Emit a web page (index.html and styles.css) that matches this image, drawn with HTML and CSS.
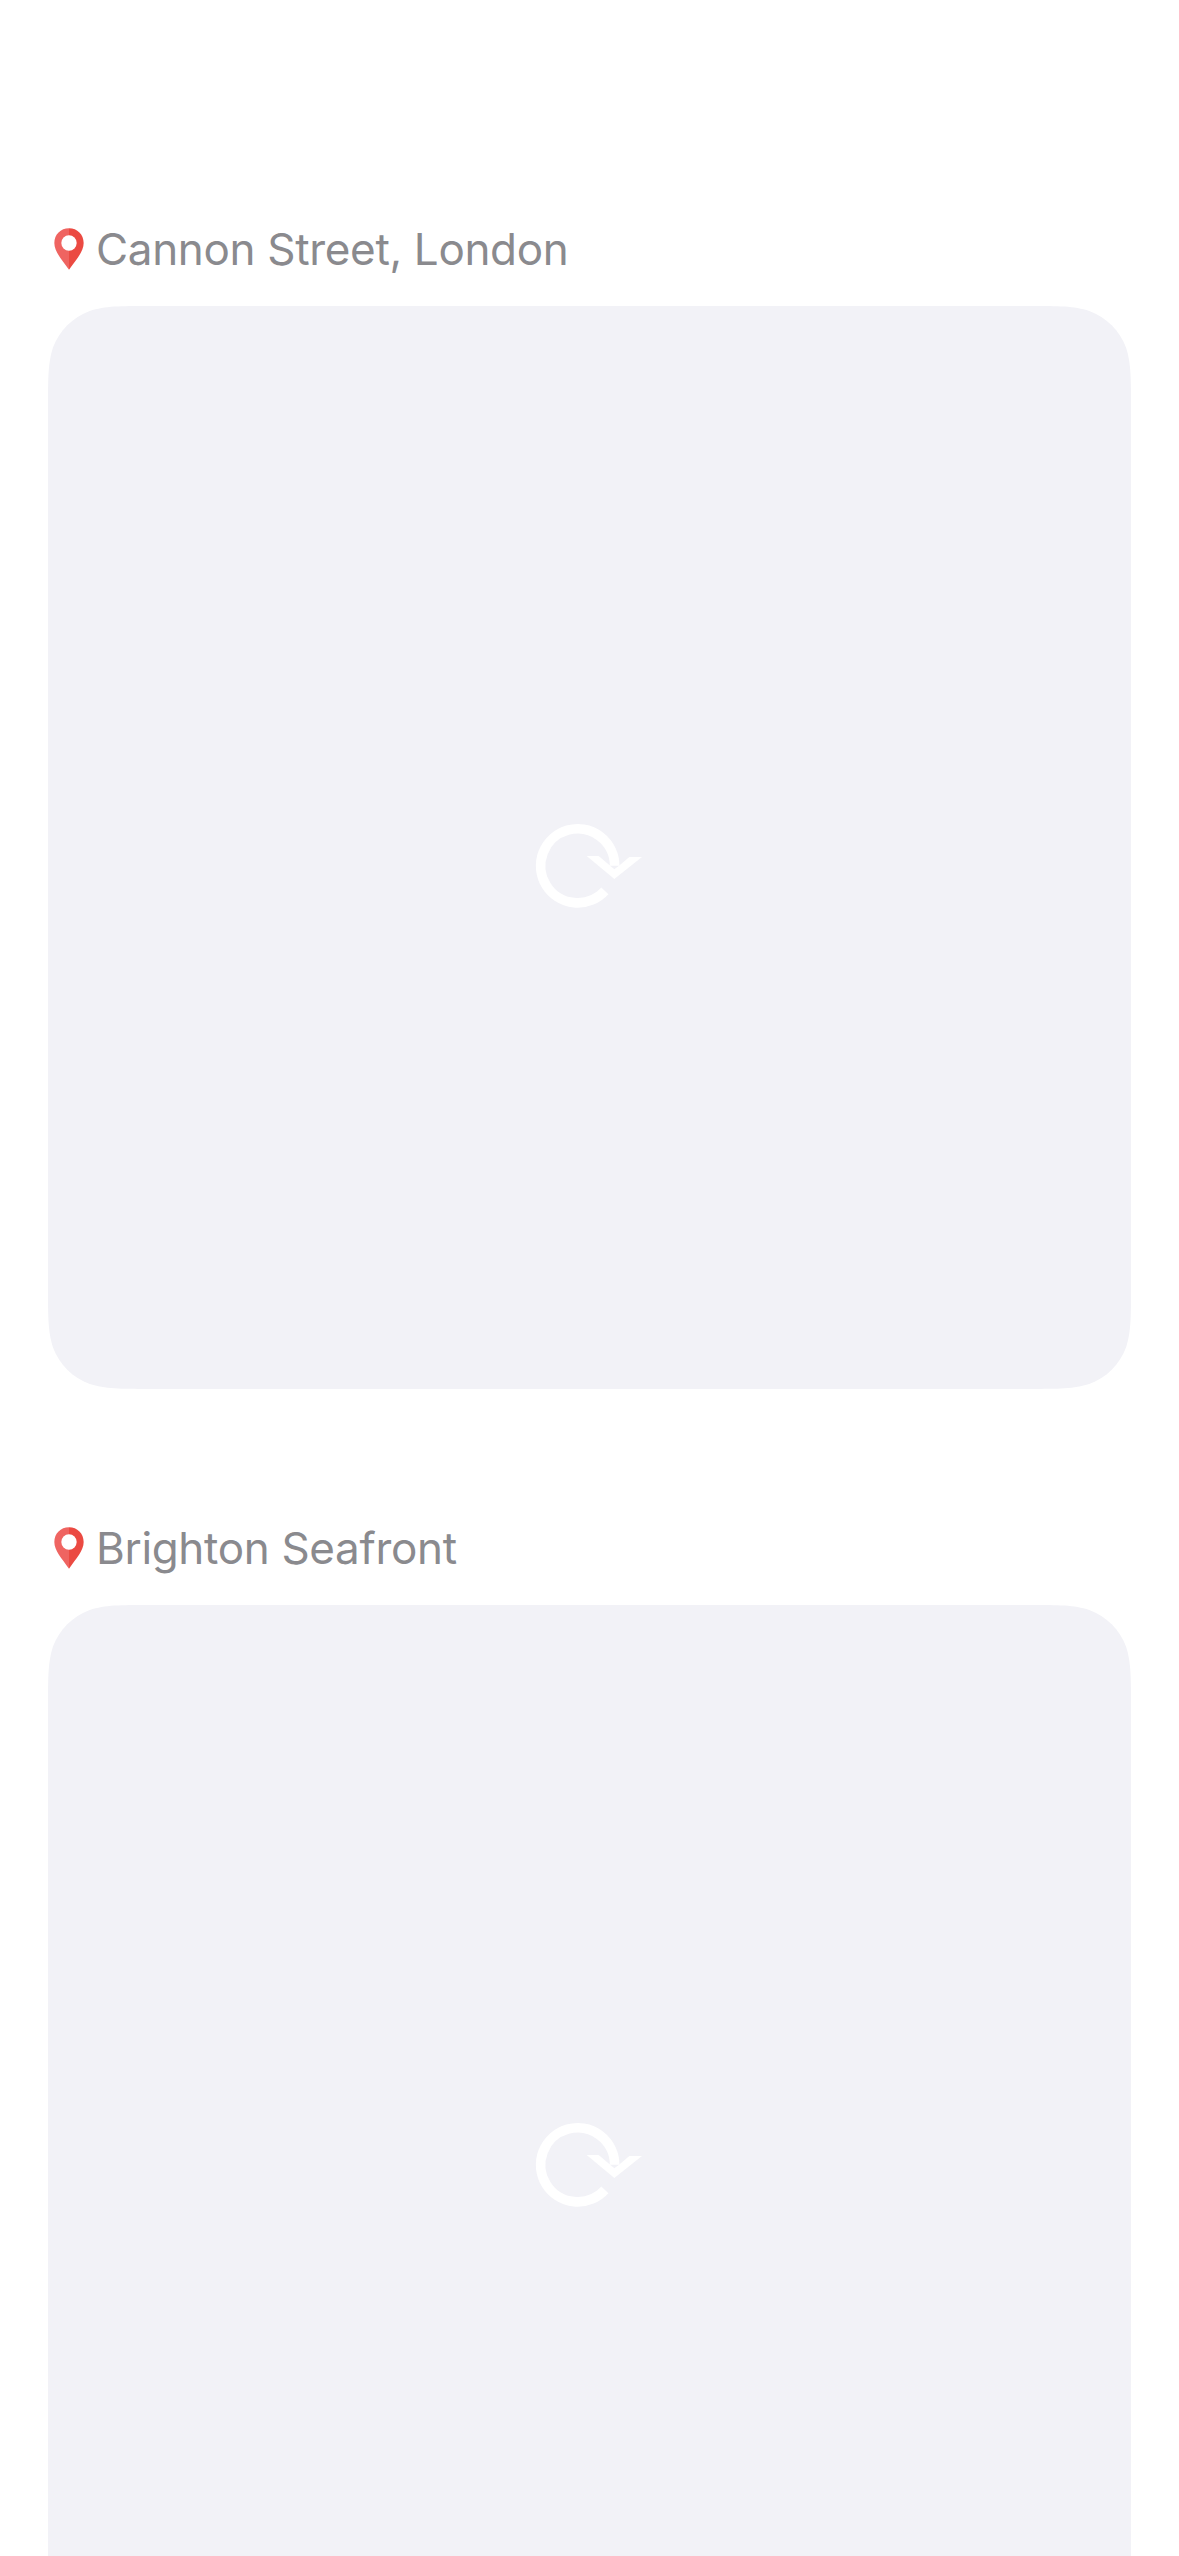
FILE: index.html
```html
<!DOCTYPE html>
<html lang="en">
<head>
<meta charset="utf-8">
<title>Places</title>
<link rel="stylesheet" href="styles.css">
</head>
<body>
<svg class="defs" width="0" height="0" aria-hidden="true">
  <symbol id="pin" viewBox="0 0 90 126">
    <path fill="#ef6461" d="M45 1C20 1 1 20 1 45C1 71 23 94 45 125Z"/>
    <path fill="#eb4a42" d="M45 1C70 1 89 20 89 45C89 71 67 94 45 125Z"/>
    <circle cx="45" cy="45" r="23" fill="#fff"/>
  </symbol>
  <symbol id="reload" viewBox="0 0 408 330">
    <path fill="none" stroke="#fff" stroke-width="29" d="M254.7 242.6A111 111 0 1 1 284 167.5"/>
    <path fill="#fff" d="M200 138H236L269 166L283 178L297 167L328 141H366L283 207Z"/>
  </symbol>
</svg>
<main class="feed">
  <section class="place">
    <h2 class="title"><svg class="pin"><use href="#pin"/></svg><span>Cannon Street, London</span></h2>
    <div class="card"><svg class="reload"><use href="#reload"/></svg></div>
  </section>
  <section class="place">
    <h2 class="title"><svg class="pin"><use href="#pin"/></svg><span>Brighton Seafront</span></h2>
    <div class="card"><svg class="reload"><use href="#reload"/></svg></div>
  </section>
</main>
</body>
</html>
```
FILE: styles.css
```css
html, body {
  margin: 0;
  height: 2556px;
  overflow: hidden;
  background: #fff;
}

.defs {
  display: block;
}

.feed {
  display: flex;
  flex-direction: column;
  gap: 132px;
  box-sizing: border-box;
  height: 2556px;
  padding: 222px 48px 0;
  overflow: hidden;
}

.place {
  display: flex;
  flex-direction: column;
  flex-shrink: 0;
  gap: 30px;
}

.title {
  display: flex;
  align-items: center;
  gap: 12px;
  height: 54px;
  margin: 0;
  padding-left: 6px;
  color: #8a8a8e;
  font: 400 44px/54px Inter, sans-serif;
  letter-spacing: -0.33px;
  white-space: nowrap;
}

.pin {
  width: 30px;
  height: 42px;
}

/* Continuous-curvature corners, 66px radius */
.card {
  display: flex;
  justify-content: center;
  align-items: center;
  box-sizing: border-box;
  height: 1083px;
  padding: 35px 3px 0 0;
  background: #f2f2f7;
  clip-path: path("M100.9 0H982.1C1011.2 0 1025.7 0 1041.3 4.9C1058.4 11.2 1071.8 24.6 1078.1 41.7C1083 57.3 1083 71.8 1083 100.9V982.1C1083 1011.2 1083 1025.7 1078.1 1041.3C1071.8 1058.4 1058.4 1071.8 1041.3 1078.1C1025.7 1083 1011.2 1083 982.1 1083H100.9C71.8 1083 57.3 1083 41.7 1078.1C24.6 1071.8 11.2 1058.4 4.9 1041.3C0 1025.7 0 1011.2 0 982.1V100.9C0 71.8 0 57.3 4.9 41.7C11.2 24.6 24.6 11.2 41.7 4.9C57.3 0 71.8 0 100.9 0Z");
}

.reload {
  width: 136px;
  height: 110px;
}
```
